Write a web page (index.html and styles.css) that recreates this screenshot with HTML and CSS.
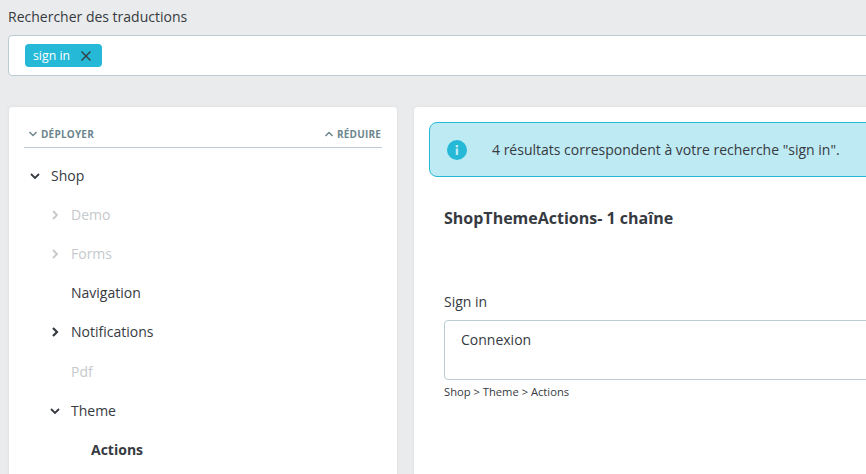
FILE: index.html
```html
<!DOCTYPE html>
<html lang="fr">
<head>
<meta charset="utf-8">
<title>Rechercher des traductions</title>
<link rel="stylesheet" href="styles.css">
</head>
<body>
<div class="page">
  <label class="search-label">Rechercher des traductions</label>
  <div class="search-box">
    <span class="chip">sign in
      <svg class="chip-x" width="12" height="12" viewBox="0 0 12 12"><path d="M1.500 1.500l9 9M10.500 1.500l-9 9" fill="none" stroke="#363a41" stroke-width="1.400"/></svg>
    </span>
  </div>
  <div class="columns">
    <aside class="card tree-card">
      <div class="tree-tools">
        <span class="tool"><svg width="10" height="6" viewBox="0 0 10 6"><path d="M1.500 1l3.500 3.500L8.500 1" class="chev"/></svg>DÉPLOYER</span>
        <span class="tool"><svg width="10" height="6" viewBox="0 0 10 6"><path d="M1.500 5L5 1.500 8.500 5" class="chev"/></svg>RÉDUIRE</span>
      </div>
      <ul class="tree">
        <li class="row level0"><svg class="arrow" width="12" height="12" viewBox="0 0 12 12"><path d="M2 4l4 4 4-4" class="arrow-path"/></svg>Shop</li>
        <li class="row level1 muted"><svg class="arrow" width="12" height="12" viewBox="0 0 12 12"><path d="M4 2l4 4-4 4" class="arrow-path"/></svg>Demo</li>
        <li class="row level1 muted"><svg class="arrow" width="12" height="12" viewBox="0 0 12 12"><path d="M4 2l4 4-4 4" class="arrow-path"/></svg>Forms</li>
        <li class="row level1"><span class="arrow"></span>Navigation</li>
        <li class="row level1"><svg class="arrow" width="12" height="12" viewBox="0 0 12 12"><path d="M4 2l4 4-4 4" class="arrow-path strong"/></svg>Notifications</li>
        <li class="row level1 muted"><span class="arrow"></span>Pdf</li>
        <li class="row level1"><svg class="arrow" width="12" height="12" viewBox="0 0 12 12"><path d="M2 4l4 4 4-4" class="arrow-path"/></svg>Theme</li>
        <li class="row level2 bold">Actions</li>
      </ul>
    </aside>
    <main class="card content-card">
      <div class="alert">
        <svg class="alert-icon" width="20" height="20" viewBox="0 0 20 20"><circle cx="10" cy="10" r="10" fill="#25b9d7"/><rect x="8.800" y="8.500" width="2.400" height="6.500" fill="#bdeaf3"/><rect x="8.800" y="5" width="2.400" height="2.400" fill="#bdeaf3"/></svg>
        <span>4 résultats correspondent à votre recherche "sign in".</span>
      </div>
      <h2 class="domain">ShopThemeActions- 1 chaîne</h2>
      <div class="field-label">Sign in</div>
      <div class="field">Connexion</div>
      <div class="crumb">Shop &gt; Theme &gt; Actions</div>
    </main>
  </div>
</div>
</body>
</html>
```
FILE: styles.css
```css
* { box-sizing: border-box; }
html, body { margin: 0; height: 474px; overflow: hidden; }
body {
  background: #eaebec;
  color: #363a41;
  font-family: "Open Sans", sans-serif;
  font-size: 14px;
  line-height: 20px;
}
.page { width: 1200px; height: 474px; overflow: hidden; padding: 7px 0 0 8px; }
.search-label { display: block; height: 20px; }
.search-box {
  margin-top: 8px;
  height: 41px;
  padding: 8px 16px;
  background: #fff;
  border: 1px solid #bbcdd2;
  border-radius: 4px;
}
.chip {
  display: inline-flex;
  align-items: center;
  height: 23px;
  padding: 0 10px 0 8px;
  gap: 10px;
  background: #25b9d7;
  color: #fff;
  font-size: 12.3px;
  border-radius: 4px;
}
.columns { display: flex; margin-top: 31px; gap: 17px; padding-left: 1px; }
.card {
  background: #fff;
  border-radius: 4px;
  height: 400px;
  box-shadow: 0 0 4px rgba(0, 0, 0, .06);
}
.tree-card { width: 388px; flex: none; padding: 15px 15px 0; }
.content-card { flex: 1; padding: 15px; }
.tree-tools {
  display: flex;
  justify-content: space-between;
  height: 26px;
  padding: 2px 1px 0 4px;
  border-bottom: 1px solid #bbcdd2;
  color: #6c868e;
  font-size: 10px;
  font-weight: 700;
  letter-spacing: .2px;
  line-height: 20px;
}
.tool { display: inline-flex; align-items: center; gap: 3px; height: 20px; }
.chev { fill: none; stroke: #6c868e; stroke-width: 1.500; }
.tree { list-style: none; margin: 0; padding: 8px 0 0; }
.row { display: flex; align-items: center; height: 39.22px; }
.arrow { flex: none; width: 12px; height: 12px; margin-right: 10px; }
.arrow-path { fill: none; stroke: #363a41; stroke-width: 1.800; }
.arrow-path.strong { stroke-width: 2.200; }
.level0 { padding-left: 5px; }
.level1 { padding-left: 25px; }
.level2 { padding-left: 67px; }
.muted { color: #c5c9cc; }
.muted .arrow-path { stroke: #c5c9cc; }
.bold { font-weight: 700; }
.alert {
  display: flex;
  align-items: center;
  height: 55px;
  padding: 0 17px;
  gap: 25px;
  background: #beeaf3;
  border: 1px solid #25b9d7;
  border-radius: 8px;
}
.alert-icon { flex: none; }
.domain {
  margin: 31px 0 0 15px;
  font-size: 16px;
  line-height: 20px;
  font-weight: 700;
}
.field-label { margin: 64px 0 0 15px; line-height: 20px; }
.field {
  margin: 8px 0 0 15px;
  height: 60px;
  padding: 9px 16px;
  background: #fff;
  border: 1px solid #bbcdd2;
  border-radius: 4px;
}
.crumb { margin: 3px 0 0 15px; font-size: 11.200px; line-height: 18px; }
```
